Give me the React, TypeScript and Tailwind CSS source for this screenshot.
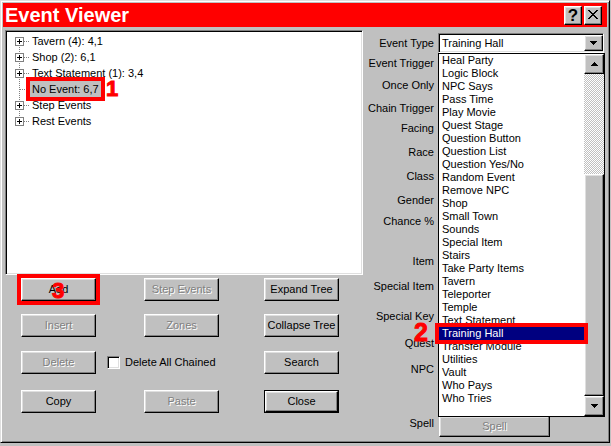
import type { ReactNode } from 'react';

const raised =
  'border border-t-white border-l-white border-r-black border-b-black shadow-[inset_-1px_-1px_0_#808080,inset_1px_1px_0_#dfdfdf] bg-[#c0c0c0]';
const sunken =
  'border border-t-[#808080] border-l-[#808080] border-r-white border-b-white shadow-[inset_1px_1px_0_#000,inset_-1px_-1px_0_#dfdfdf] bg-white';

function Btn({ label, disabled, isDefault, className = '', children }: { label: string; disabled?: boolean; isDefault?: boolean; className?: string; children?: ReactNode }) {
  const text = disabled ? 'text-[#808080] [text-shadow:1px_1px_0_#fff]' : 'text-black';
  if (isDefault) {
    return (
      <div className={`w-[75px] h-[23px] border border-black ${className}`}>
        <div className={`${raised} w-full h-full flex items-center justify-center ${text}`}>{label}</div>
      </div>
    );
  }
  return (
    <div className={`relative w-[75px] h-[23px] flex items-center justify-center ${raised} ${text} ${className}`}>
      {label}
      {children}
    </div>
  );
}

function Arrow({ down }: { down?: boolean }) {
  return (
    <svg width="7" height="4" viewBox="0 0 7 4" shapeRendering="crispEdges">
      {down ? (
        <g fill="#000">
          <rect x="0" y="0" width="7" height="1" />
          <rect x="1" y="1" width="5" height="1" />
          <rect x="2" y="2" width="3" height="1" />
          <rect x="3" y="3" width="1" height="1" />
        </g>
      ) : (
        <g fill="#000">
          <rect x="3" y="0" width="1" height="1" />
          <rect x="2" y="1" width="3" height="1" />
          <rect x="1" y="2" width="5" height="1" />
          <rect x="0" y="3" width="7" height="1" />
        </g>
      )}
    </svg>
  );
}

function TreeGlyph({ first, last, plus }: { first?: boolean; last?: boolean; plus?: boolean }) {
  return (
    <svg width="22" height="16" viewBox="0 0 22 16" shapeRendering="crispEdges" className="shrink-0">
      <line x1="11.5" y1={first ? 8 : 0} x2="11.5" y2={last ? 8 : 16} stroke="#808080" strokeDasharray="1 1" />
      <line x1="12" y1="8.5" x2="22" y2="8.5" stroke="#808080" strokeDasharray="1 1" />
      {plus && (
        <g>
          <rect x="7.5" y="4.5" width="8" height="8" fill="#fff" stroke="#808080" />
          <rect x="9" y="8" width="5" height="1" fill="#000" />
          <rect x="11" y="6" width="1" height="5" fill="#000" />
        </g>
      )}
    </svg>
  );
}

const treeRows = [
  { label: 'Tavern (4): 4,1', plus: true },
  { label: 'Shop (2): 6,1', plus: true },
  { label: 'Text Statement (1): 3,4', plus: true },
  { label: 'No Event: 6,7', plus: false, selected: true },
  { label: 'Step Events', plus: true },
  { label: 'Rest Events', plus: true },
];

const eventTypes = [
  'Heal Party', 'Logic Block', 'NPC Says', 'Pass Time', 'Play Movie', 'Quest Stage', 'Question Button',
  'Question List', 'Question Yes/No', 'Random Event', 'Remove NPC', 'Shop', 'Small Town', 'Sounds',
  'Special Item', 'Stairs', 'Take Party Items', 'Tavern', 'Teleporter', 'Temple', 'Text Statement',
  'Training Hall', 'Transfer Module', 'Utilities', 'Vault', 'Who Pays', 'Who Tries',
];

const labels = [
  { text: 'Event Trigger', mt: 'mt-[4px]' },
  { text: 'Once Only', mt: 'mt-[9px]' },
  { text: 'Chain Trigger', mt: 'mt-[10px]' },
  { text: 'Facing', mt: 'mt-[7px]' },
  { text: 'Race', mt: 'mt-[11px]' },
  { text: 'Class', mt: 'mt-[11px]' },
  { text: 'Gender', mt: 'mt-[11px]' },
  { text: 'Chance %', mt: 'mt-[8px]' },
  { text: 'Item', mt: 'mt-[27px]' },
  { text: 'Special Item', mt: 'mt-[12px]' },
  { text: 'Special Key', mt: 'mt-[17px]' },
  { text: 'Quest', mt: 'mt-[14px]' },
  { text: 'NPC', mt: 'mt-[13px]' },
];

export default function App() {
  return (
    <div className="w-[611px] h-[446px] bg-[#c0c0c0] font-['Liberation_Sans',Arial,sans-serif] text-[11px] text-black">
      <div className="w-[610px] h-[443px] border border-t-[#dfdfdf] border-l-[#dfdfdf] border-r-black border-b-black shadow-[inset_1px_1px_0_#fff,inset_-1px_-1px_0_#808080] p-[2px] flex flex-col">
        {/* title bar */}
        <div className="h-[24px] bg-[#ff0000] flex items-center pl-[2px] pr-[5px] shrink-0">
          <span className="text-white font-bold text-[20px] leading-none flex-1">Event Viewer</span>
          <div className={`${raised} w-[18px] h-[19px] flex items-center justify-center font-bold text-[17px] leading-none`}>?</div>
          <div className={`${raised} w-[18px] h-[19px] ml-[2px] flex items-center justify-center`}>
            <svg width="11" height="10" viewBox="0 0 11 10" shapeRendering="crispEdges">
              <path d="M1 0 L10 9 M0 0 L9 9 M10 0 L1 9 M9 0 L0 9" stroke="#000" strokeWidth="1" />
            </svg>
          </div>
        </div>

        <div className="flex flex-1">
          {/* left column */}
          <div className="w-[358px] ml-[2px] flex flex-col">
            <div className={`${sunken} mt-[3px] h-[245px] pt-[2px] px-[2px]`}>
              {treeRows.map((r, i) => (
                <div key={r.label} className="relative flex items-center h-[16px]">
                  <TreeGlyph first={i === 0} last={i === treeRows.length - 1} plus={r.plus} />
                  <span
                    className={`px-[2px] leading-[16px] whitespace-nowrap ${r.selected ? 'bg-[#c0c0c0] outline-4 outline-[#ff0000]' : ''}`}
                  >
                    {r.label}
                  </span>
                  {r.selected && (
                    <span className="absolute left-[98px] top-[-3px] text-[22px] leading-none font-bold text-[#ff0000] [-webkit-text-stroke:1px_#ff0000]">
                      1
                    </span>
                  )}
                </div>
              ))}
            </div>

            <div className="flex mt-[3px]">
              <Btn label="Add" className="ml-[16px] outline-4 outline-[#ff0000]">
                <span className="absolute left-[30px] top-[1px] text-[22px] leading-none font-bold text-[#ff0000] [-webkit-text-stroke:1px_#ff0000]">
                  3
                </span>
              </Btn>
              <div className="w-[123px]">
                <Btn label="Step Events" disabled className="ml-[48px]" />
              </div>
              <Btn label="Expand Tree" className="ml-[45px]" />
            </div>
            <div className="flex mt-[13px]">
              <Btn label="Insert" disabled className="ml-[16px]" />
              <div className="w-[123px]">
                <Btn label="Zones" disabled className="ml-[48px]" />
              </div>
              <Btn label="Collapse Tree" className="ml-[45px]" />
            </div>
            <div className="flex mt-[14px]">
              <Btn label="Delete" disabled className="ml-[16px]" />
              <div className="w-[123px] flex items-center">
                <div className={`${sunken} w-[13px] h-[13px] ml-[11px]`} />
                <span className="ml-[5px] whitespace-nowrap">Delete All Chained</span>
              </div>
              <Btn label="Search" className="ml-[45px]" />
            </div>
            <div className="flex mt-[16px]">
              <Btn label="Copy" className="ml-[16px]" />
              <div className="w-[123px]">
                <Btn label="Paste" disabled className="ml-[48px]" />
              </div>
              <Btn label="Close" isDefault className="ml-[45px]" />
            </div>
          </div>

          {/* right column */}
          <div className="relative flex-1 flex flex-col">
            <div className="flex items-center h-[20px] mt-[6px]">
              <span className="w-[71px] text-right leading-[13px]">Event Type</span>
              <div className={`${sunken} ml-[4px] w-[166px] h-[20px] flex items-center`}>
                <span className="flex-1 pl-[3px] leading-none">Training Hall</span>
                <div className={`${raised} w-[19px] h-[16px] flex items-center justify-center`}>
                  <Arrow down />
                </div>
              </div>
            </div>
            {labels.map((l) => (
              <div key={l.text} className={`flex h-[13px] items-center ${l.mt}`}>
                <span className="w-[71px] text-right leading-[13px] whitespace-nowrap">{l.text}</span>
              </div>
            ))}
            <div className="flex h-[21px] mt-[40px]">
              <span className="w-[71px] text-right leading-[13px] mt-[1px]">Spell</span>
              <div className={`${raised} ml-[5px] w-[111px] h-[21px] flex items-center justify-center text-[#808080] [text-shadow:1px_1px_0_#fff]`}>
                Spell
              </div>
            </div>

            {/* open dropdown list */}
            <div className="absolute left-[75px] top-[26px] w-[167px] h-[364px] border border-black bg-white flex z-20">
              <div className="flex-1">
                {eventTypes.map((t) => (
                  <div
                    key={t}
                    className={`h-[13px] leading-[13px] pl-[3px] whitespace-nowrap ${
                      t === 'Training Hall' ? 'relative z-10 bg-[#000080] text-white outline-4 outline-[#ff0000]' : ''
                    }`}
                  >
                    {t}
                  </div>
                ))}
              </div>
              <div className="w-[20px] flex flex-col">
                <div className={`${raised} h-[20px] flex items-center justify-center`}>
                  <Arrow />
                </div>
                <div className="h-[100px] [background-image:repeating-conic-gradient(#c0c0c0_0_25%,#fff_0_50%)] [background-size:2px_2px]" />
                <div className={`${raised} h-[222px]`} />
                <div className={`${raised} h-[20px] flex items-center justify-center`}>
                  <Arrow down />
                </div>
              </div>
            </div>

            <span className="absolute left-[51px] top-[293px] z-30 text-[25px] leading-none font-bold text-[#ff0000] [-webkit-text-stroke:1px_#ff0000]">
              2
            </span>
          </div>
        </div>
      </div>
    </div>
  );
}
